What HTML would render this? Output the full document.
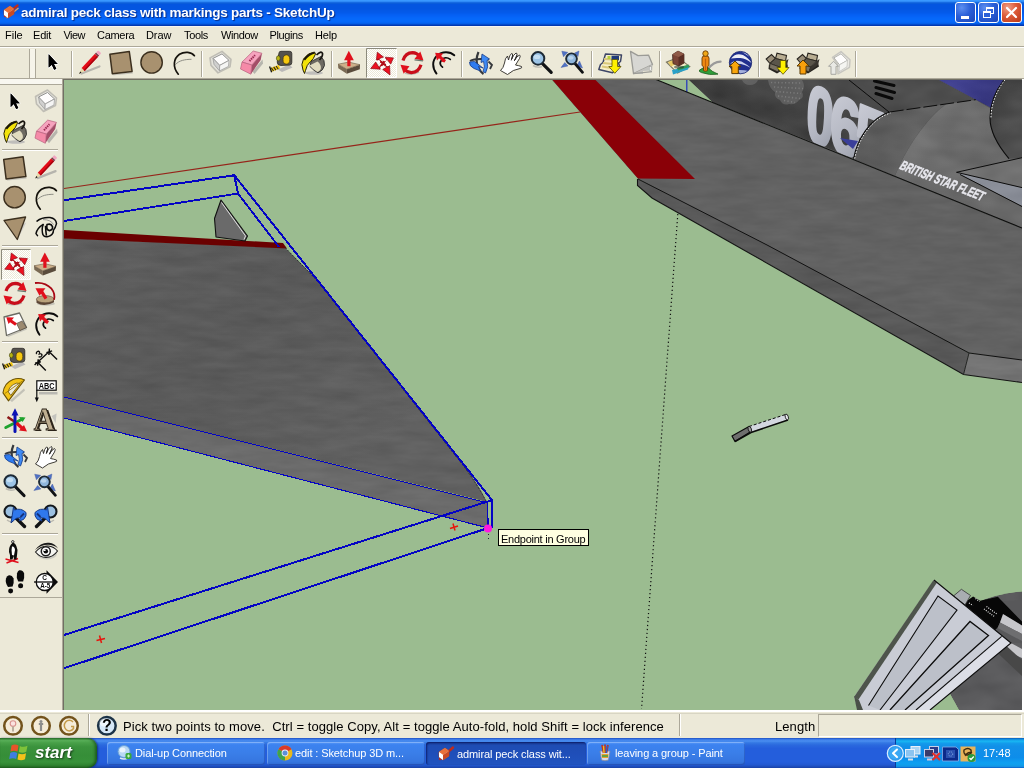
<!DOCTYPE html>
<html><head><meta charset="utf-8"><title>admiral peck class with markings parts - SketchUp</title>
<style>
html,body{margin:0;padding:0;}
body{width:1024px;height:768px;overflow:hidden;background:#ece9d8;position:relative;font-family:"Liberation Sans","DejaVu Sans",sans-serif;font-size:11px;color:#000;}
#root{position:absolute;left:0;top:0;width:1024px;height:768px;overflow:hidden;will-change:transform;transform:translateZ(0);}
.abs,.abs-all *{position:absolute;}
div,span{box-sizing:border-box;}
#title{left:0;top:0;width:1024px;height:26px;background:linear-gradient(to bottom,#3a98ff 1.92%,#2f8af6 5.77%,#166ae2 9.62%,#0a5cda 13.46%,#0455e0 17.31%,#0455e0 21.15%,#0455e0 25.00%,#0455e0 28.85%,#0455e0 32.69%,#0456e2 36.54%,#0458e6 40.38%,#0459e8 44.23%,#045aea 48.08%,#045cee 51.92%,#055ff2 55.77%,#0561f5 59.62%,#0663f7 63.46%,#0666f9 67.31%,#0668fa 71.15%,#0669fb 75.00%,#0569fb 78.85%,#0568fa 82.69%,#0565f4 86.54%,#045ee8 90.38%,#034acc 94.23%,#0238b0 98.08%);}
#title .t{left:21px;top:5px;color:#fff;font-weight:bold;font-size:13.5px;letter-spacing:-0.25px;white-space:nowrap;text-shadow:1px 1px 1px #0a2a80;}
.cap{top:2px;width:21px;height:21px;border:1px solid #fff;border-radius:3px;background:radial-gradient(circle at 30% 25%,#5d8ff0 0%,#2a5fd8 45%,#1c46b8 100%);}
.cap.x{background:radial-gradient(circle at 30% 25%,#f0a088 0%,#dc5a38 45%,#b83818 100%);}
#menu{left:0;top:26px;width:1024px;height:20px;background:#ece9d8;border-top:1px solid #f6f5f0;}
#menu span{position:absolute;top:2px;white-space:nowrap;font-size:11px;}
#tb{left:0;top:46px;width:1024px;height:33px;background:#ece9d8;border-top:1px solid #aca899;}
.vsep{width:2px;border-left:1px solid #aca899;border-right:1px solid #fff;}
#ltb{left:0;top:79px;width:63px;height:631px;background:#ece9d8;border-right:1px solid #aca899;}
.hsep{height:2px;border-top:1px solid #aca899;border-bottom:1px solid #fff;left:2px;width:56px;}
#status{left:0;top:710px;width:1024px;height:28px;background:#ece9d8;border-top:2px solid #fff;}
#status .st{left:123px;top:7px;font-size:13px;letter-spacing:0.07px;white-space:pre;}
#taskbar{left:0;top:738px;width:1024px;height:30px;background:linear-gradient(to bottom,#1f4fc0 0%,#3a7ae8 5%,#4a8ef0 10%,#3478e4 16%,#2a68de 24%,#245edc 35%,#245edc 80%,#2258d0 90%,#1d4bb8 96%,#1941a5 100%);}
#start{left:0;top:0;width:97px;height:30px;border-radius:0 9px 9px 0;background:linear-gradient(to bottom,#2f7a32 0%,#58b058 8%,#48a048 16%,#3a923c 30%,#368e38 60%,#38923a 80%,#2e822f 92%,#236a24 100%);box-shadow:inset -2px 0 3px rgba(0,40,0,.5), 1px 0 2px rgba(0,0,60,.5);}
#start .s{left:35px;top:5px;color:#fff;font-weight:bold;font-style:italic;font-size:17px;text-shadow:1px 1px 2px rgba(0,0,0,.6);letter-spacing:0px;}
.tbtn{top:4px;height:23px;width:158px;border-radius:3px;background:linear-gradient(to bottom,#5a9af8 0%,#3c82f0 12%,#3a7ee8 50%,#3676e0 85%,#2e68d0 100%);color:#fff;font-size:11px;box-shadow:inset 1px 1px 0 rgba(255,255,255,.25), inset -1px -1px 0 rgba(0,0,80,.2);}
.tbtn.on{background:linear-gradient(to bottom,#1a3f9c 0%,#1e4cb4 15%,#1f4fba 60%,#2054c0 100%);box-shadow:inset 1px 1px 2px rgba(0,0,60,.6);}
.tbtn span{left:28px;top:5px;white-space:nowrap;letter-spacing:-0.1px;}
#tray{left:895px;top:0;width:129px;height:30px;background:linear-gradient(to bottom,#0c59b9 0%,#139ee9 6%,#18b5f2 11%,#139beb 18%,#1290e8 28%,#0d8dea 65%,#0d9ff1 82%,#0f9eed 90%,#1392e2 95%,#095bc9 100%);border-left:1px solid #0a3c9a;}
#tray .tm{left:87px;top:9px;color:#fff;font-size:11px;}
</style></head><body><div id="root">
<div id="title" class="abs abs-all"><span class="t">admiral peck class with markings parts - SketchUp</span>
<div class="cap" style="left:955px"><div style="left:5px;top:13px;width:8px;height:3px;background:#fff"></div></div><div class="cap" style="left:978px"><div style="left:7px;top:4px;width:8px;height:7px;border:1px solid #fff;border-top-width:2px"></div><div style="left:4px;top:8px;width:8px;height:7px;border:1px solid #fff;border-top-width:2px;background:#2a5fd8"></div></div><div class="cap x" style="left:1001px"><svg width="19" height="19" viewBox="0 0 19 19" style="left:0;top:0"><path d="M5,5 L14,14 M14,5 L5,14" stroke="#fff" stroke-width="2.200" stroke-linecap="round"/></svg></div>
<svg width="18" height="18" viewBox="0 0 18 18" style="left:2px;top:3px"><path d="M3,13 L15.500,2.500" stroke="#c02a1a" stroke-width="2.400" stroke-linecap="round"/><path d="M4.500,15 L16.500,5" stroke="#e8a060" stroke-width="1.300"/><polygon points="2,7 8,3 12,6 12,11 6,15 2,12" fill="#f4e8d8" stroke="#a04028" stroke-width=".8"/><polygon points="2,7 8,3 12,6 6,10" fill="#e8703a"/><polygon points="6,10 12,6 12,11 6,15" fill="#c84a24"/><polygon points="2,7 6,10 6,15 2,12" fill="#fff"/></svg></div>
<div id="menu" class="abs"><span style="left:5px;letter-spacing:0px">File</span><span style="left:33px;letter-spacing:-0.2px">Edit</span><span style="left:63.5px;letter-spacing:-0.6px">View</span><span style="left:97px;letter-spacing:-0.3px">Camera</span><span style="left:146px;letter-spacing:-0.1px">Draw</span><span style="left:184px;letter-spacing:-0.35px">Tools</span><span style="left:221px;letter-spacing:-0.4px">Window</span><span style="left:269.5px;letter-spacing:-0.4px">Plugins</span><span style="left:315px;letter-spacing:-0.2px">Help</span></div>
<div id="tb" class="abs abs-all">
<div style="left:0;top:0;width:1024px;height:1px;background:#fff"></div>
<div style="left:29px;top:2px;width:7px;height:30px;border-left:1px solid #aca899;border-right:1px solid #aca899;background:#f6f4ea"></div>
<div class="vsep" style="left:71px;top:4px;height:26px"></div>
<div class="vsep" style="left:201px;top:4px;height:26px"></div>
<div class="vsep" style="left:331px;top:4px;height:26px"></div>
<div class="vsep" style="left:461px;top:4px;height:26px"></div>
<div class="vsep" style="left:591px;top:4px;height:26px"></div>
<div class="vsep" style="left:659px;top:4px;height:26px"></div>
<div class="vsep" style="left:758px;top:4px;height:26px"></div>
<div class="vsep" style="left:855px;top:4px;height:26px"></div>
<div style="left:0;top:31px;width:1024px;height:1px;background:#aca899"></div>
</div>
<div id="ltb" class="abs abs-all">
<div style="left:0;top:0;width:62px;height:6px;background:#f8f7f0;border-bottom:1px solid #aca899"></div>
<div class="hsep" style="top:70px"></div>
<div class="hsep" style="top:166px"></div>
<div class="hsep" style="top:262px"></div>
<div class="hsep" style="top:358px"></div>
<div class="hsep" style="top:454px"></div>
<div style="left:0;top:518px;width:62px;height:1px;background:#aca899"></div>
</div>
<svg id="vp" width="1024" height="768" viewBox="0 0 1024 768" style="position:absolute;left:0;top:0">
<defs>
<clipPath id="vclip"><rect x="64" y="80" width="958" height="630"/></clipPath>
<filter id="tex" x="0" y="0" width="100%" height="100%" color-interpolation-filters="sRGB">
  <feTurbulence type="fractalNoise" baseFrequency="0.025 0.11" numOctaves="3" seed="7" result="n"/>
  <feColorMatrix in="n" type="matrix" values="1 0 0 0 0  1 0 0 0 0  1 0 0 0 0  0 0 0 0 1" result="g"/>
  <feComposite in="SourceGraphic" in2="g" operator="arithmetic" k1="0" k2="1" k3="0.07" k4="-0.04" result="m"/>
  <feComposite in="m" in2="SourceGraphic" operator="in"/>
</filter>
<linearGradient id="lwing" gradientUnits="userSpaceOnUse" x1="64" y1="240" x2="300" y2="520">
  <stop offset="0" stop-color="#5f5f5f"/><stop offset="0.5" stop-color="#5b5b5b"/><stop offset="1" stop-color="#626262"/>
</linearGradient>
<linearGradient id="fus" gradientUnits="userSpaceOnUse" x1="800" y1="80" x2="770" y2="150">
  <stop offset="0" stop-color="#4a4a4a"/><stop offset="0.6" stop-color="#3e3e3e"/><stop offset="1" stop-color="#565656"/>
</linearGradient>
<filter id="tex2" x="0" y="0" width="100%" height="100%" color-interpolation-filters="sRGB">
  <feTurbulence type="fractalNoise" baseFrequency="0.03 0.06" numOctaves="2" seed="3" result="n"/>
  <feColorMatrix in="n" type="matrix" values="1 0 0 0 0  1 0 0 0 0  1 0 0 0 0  0 0 0 0 1" result="g"/>
  <feComposite in="SourceGraphic" in2="g" operator="arithmetic" k1="0" k2="1" k3="0.10" k4="-0.05" result="m"/>
  <feComposite in="m" in2="SourceGraphic" operator="in"/>
</filter>
<linearGradient id="nacd" gradientUnits="userSpaceOnUse" x1="860" y1="120" x2="920" y2="170"><stop offset="0" stop-color="#5a5a5a"/><stop offset="1" stop-color="#646464"/></linearGradient>
<linearGradient id="nacl" gradientUnits="userSpaceOnUse" x1="930" y1="110" x2="1000" y2="200"><stop offset="0" stop-color="#707070"/><stop offset="1" stop-color="#666"/></linearGradient>
<linearGradient id="nacr" gradientUnits="userSpaceOnUse" x1="990" y1="100" x2="1022" y2="120"><stop offset="0" stop-color="#3e3e3e"/><stop offset="1" stop-color="#505050"/></linearGradient>
<linearGradient id="blu" gradientUnits="userSpaceOnUse" x1="940" y1="80" x2="995" y2="105"><stop offset="0" stop-color="#444496"/><stop offset="1" stop-color="#38387e"/></linearGradient>
<clipPath id="numclip"><path d="M689,80 L849,80 L889.7,112 C870,118 857,140 853.7,158.6 L713,102.5 Z"/></clipPath>
<linearGradient id="numg" x1="0.2" y1="0.15" x2="0.6" y2="1"><stop offset="0" stop-color="#c8cad4"/><stop offset="0.6" stop-color="#b4b7c2"/><stop offset="1" stop-color="#9a9eaa"/></linearGradient>
</defs>
<rect x="63" y="79" width="961" height="633" fill="#fff"/><rect x="63" y="79" width="959" height="631" fill="#716f64"/>
<g clip-path="url(#vclip)">
<rect x="64" y="80" width="958" height="630" fill="#9bbc90"/>

<!-- left wing -->
<g filter="url(#tex)">
<path d="M64,238 L285,247.5 L318,280.5 L465,466 Q480,487 487,502 L64,397 Z" fill="url(#lwing)"/>
<polygon points="64,397 487,502.5 488,528 64,418" fill="#6c6c6c"/>
</g>
<polygon points="64,230 283,243 287,248.5 64,238.5" fill="#6a0000"/>
<!-- small fin -->
<polygon points="221,200 247.5,236 245,241 216,237 214.5,218.5" fill="#6a6a6a" stroke="#111" stroke-width="1.100" stroke-linejoin="round"/>
<polyline points="221.500,202.500 245.500,236 244,239.500" fill="none" stroke="#e0e0e0" stroke-width="1"/>

<!-- red axis -->
<line x1="64" y1="188.5" x2="580" y2="112" stroke="#96241a" stroke-width="1.200"/>

<!-- right wing -->
<g filter="url(#tex)">
<polygon points="552,80 657,80 1022,228 1022,361 969,353 638,179" fill="#636363"/>
<polygon points="638,179 637.5,185.5 652,198 963.5,374.5 969,353 768,245.5" fill="#5a5a5a"/>
<polygon points="969,353 1022,360 1022,382.5 963.5,374.5" fill="#757575"/>
</g>
<polygon points="552.5,80 595.5,80 695,179 638,178.5" fill="#8a0007"/>
<polyline points="638,179 768,245.5 969,353 1022,360" fill="none" stroke="#111" stroke-width="1"/>
<polyline points="637.5,179 637.5,185.5 652,198 963.5,374.5 1022,382.5" fill="none" stroke="#141414" stroke-width="1.1"/>
<line x1="969" y1="353" x2="963.5" y2="374.5" stroke="#222" stroke-width="1"/>

<!-- fuselage -->
<polygon points="689,80 1022,80 1022,228 713,102.5" fill="#5a5a5a"/>
<g filter="url(#tex2)">
<polygon points="689,80 849,80 889.7,112 870,124 858,144 853.7,158.6 713,102.5" fill="url(#fus)"/>
<polygon points="849,80 939,80 975.8,99.7 889.7,112" fill="#4c4c4c"/>
<path d="M853.7,158.6 C857,140 870,118 889.7,112 L946,104 C925,120 905,150 895,176 Z" fill="url(#nacd)"/>
<path d="M946,104 L975.8,99.7 L990,108 L990,120 L993.4,135.8 L1009,158.6 L1022,158 L1022,228 L895,176 C905,150 925,120 946,104 Z" fill="url(#nacl)"/>
<path d="M1004,80 L1022,80 L1022,157.7 L1009,158.6 C1000,148 990,134 990,118 C990,104 996,90 1004,80 Z" fill="url(#nacr)"/>
<polygon points="939,80 1004,80 996,92 991,108 975.8,99.7" fill="url(#blu)"/>
<polygon points="956.5,172.3 1022,157.7 1022,187.6" fill="#707070"/>
<polygon points="956.5,172.3 1022,187.6 1022,206" fill="#8b8f99"/>
</g>
<g fill="#8a8a8a" opacity=".38"><path d="M742,80 L758,80 Q756,85 750,85 Q744,85 742,80 Z"/><path d="M768,80 L802,80 Q806,86 802,92 Q805,97 799,100 Q796,105 789,104 Q783,106 780,100 Q774,98 775,92 Q769,88 768,80 Z"/></g>
<g fill="none" stroke="#a4a4a4" opacity=".4" stroke-width="1.600" stroke-dasharray="1.200 2.300"><path d="M771,82.500 L801,83 M774,87 L803,88.500 M776,91.500 L801,93.500 M778,96 L800,98.500 M784,100.500 L795,102.500"/></g>
<g clip-path="url(#numclip)"><text transform="matrix(0.600,0.240,-0.05,1,805.5,138.8)" font-family="Liberation Sans,sans-serif" font-weight="bold" font-size="80" fill="url(#numg)" stroke="url(#numg)" stroke-width="3.500" stroke-linejoin="round">0</text>
<text transform="matrix(0.680,0.272,-0.05,1,829.0,148.4)" font-family="Liberation Sans,sans-serif" font-weight="bold" font-size="80" fill="url(#numg)" stroke="url(#numg)" stroke-width="3.500" stroke-linejoin="round">6</text>
<text transform="matrix(0.680,0.272,-0.05,1,854.0,158.6)" font-family="Liberation Sans,sans-serif" font-weight="bold" font-size="80" fill="url(#numg)" stroke="url(#numg)" stroke-width="3.500" stroke-linejoin="round">5</text>
<polygon points="840,138 858,141 853,149" fill="#3a3f9a"/></g>
<g stroke="#0a0a0a" stroke-width="3" stroke-linecap="round"><path d="M874.500,81 L894,85.500 M876,87.500 L894.500,92.500 M876,93.500 L892,98.500"/></g>
<g fill="none" stroke="#0c0c0c" stroke-width="1">
<line x1="849" y1="80" x2="889" y2="112"/>
<path d="M889.7,112 L975.8,99.7" stroke-dasharray="14 3"/>
<path d="M956.5,172.3 L1022,157.7 M956.5,172.3 L1022,187.6 M960,174.5 L1022,206.5"/>
</g>
<path d="M853.7,158.6 C857,140 870,118 889.7,112" fill="none" stroke="#0c0c0c" stroke-width="1.200"/>
<path d="M854.700,158.6 C858,140 871,119 890.500,113" fill="none" stroke="#f4f4f4" stroke-width="1" stroke-dasharray="1.500 1.500"/>
<path d="M1004,80 C996,90 990,104 990,118 C990,134 1000,148 1009,158.6" fill="none" stroke="#0c0c0c" stroke-width="1.100"/>
<path d="M1004.800,80 C997,90 991,104 991,118" fill="none" stroke="#f4f4f4" stroke-width="1" stroke-dasharray="1.500 1.500"/>
<text transform="translate(898.5,168.6) rotate(21.2) skewX(-12)" font-family="Liberation Sans,sans-serif" font-weight="bold" font-size="13.500" fill="#e8e8ee" stroke="#e8e8ee" stroke-width=".500" textLength="89" lengthAdjust="spacingAndGlyphs">BRITISH STAR FLEET</text>
<line x1="686.8" y1="80" x2="686.8" y2="92" stroke="#2030c0" stroke-width="1.200"/>
<line x1="656" y1="79.5" x2="1022" y2="228" stroke="#0e0e0e" stroke-width="1.100"/>

<!-- small rod -->
<polygon points="732,436 749,426.500 751,431.500 735,441.500" fill="#6e6e6e" stroke="#0a0a0a" stroke-width="1.200" stroke-linejoin="round"/>
<polygon points="749,426.500 785.500,414.500 788,419.500 751,432" fill="#d3d7df"/>
<path d="M735,441.500 L751,432.500 L788,420" fill="none" stroke="#0a0a0a" stroke-width="1.500"/>
<path d="M749,426.500 L785.500,414.500" fill="none" stroke="#0a0a0a" stroke-width="1" stroke-dasharray="3 2"/>
<ellipse cx="786.800" cy="417" rx="1.500" ry="3" fill="#e6e8ee" stroke="#0a0a0a" stroke-width=".8" transform="rotate(-18 786.8 417)"/>
<ellipse cx="749.800" cy="429.300" rx="1.600" ry="3" fill="#9a9a9a" stroke="#0a0a0a" stroke-width=".8" transform="rotate(-18 749.8 429.3)"/>

<!-- bottom-right object -->
<path d="M975,603 Q1000,593 1022,591.500 L1022,710 L959,710 L949,692 Z" fill="#5a5a5c" filter="url(#tex2)"/>
<polygon points="962,602 1011,643 1022,643 1022,600 975,603" fill="#58585a"/>
<polygon points="963,603.500 973.100,596.400 980.200,600.700 997.800,596.700 1022,621.600 1022,626 1003.600,614.500 997.800,627.400 995,630" fill="#070707"/>
<path d="M1003,614 L1022,625.500 L1022,634 L1000,622.500 Z" fill="#c6c6ca"/>
<path d="M1000,622.500 L1022,634 L1022,641 L997.500,628 Z" fill="#6e6e70"/>
<path d="M1007,641 L1022,649 L1022,658 L1003,650 Z" fill="#c6c6ca"/>
<path d="M990,631 L1022,660 L1022,676 L986,642 Z" fill="#484848"/>
<path d="M969,603 L973,605.500 M975.500,598.500 L979.500,601.500 M984,609 L995,617 M986.500,606.500 L997.500,614.500" stroke="#e8e8e8" stroke-width="1.200" stroke-dasharray="1 1.300"/>
<polygon points="953.500,596 961.400,589.300 970.500,595.500 965,605" fill="#a9adb1" stroke="#333" stroke-width=".8"/>
<polygon points="934,580 1011,643 930,710 858,710 854,697" fill="#c9ccd5"/>
<polygon points="938,596 957,610 880,710 868.500,705.500" fill="#bcc0c9"/>
<polygon points="970,621.500 988.500,635.500 905,710 890,710" fill="#bcc0c9"/>
<polygon points="1001.700,636.400 1011,643 930,710 916,710" fill="#dcdee6"/>
<polygon points="933.300,580.300 937,582.500 858.500,699.500 854,697" fill="#4e544c"/>
<polygon points="854,696 859,700 863,710 857,710" fill="#4a5048"/>
<g fill="none" stroke="#0c0c0c" stroke-width="1.100">
<path d="M934,580 L1011,643 L930,710"/>
<path d="M868.500,705.500 L938,596 L957,610 L880,710"/>
<path d="M890,710 L970,621.500 L988.500,635.500 L905,710" stroke-width="1.300"/>
<path d="M1001.700,636.400 L916,710"/>
</g>
<!-- dotted guide -->
<line x1="677.8" y1="214" x2="641.5" y2="709" stroke="#101010" stroke-width="1.200" stroke-dasharray="1.200 2.800"/>

<!-- selection bounding box -->
<path d="M285,247.5 L318,281.5 L464,466.5 Q479,487 486.500,502" fill="none" stroke="#2a2a30" stroke-width="1" stroke-dasharray="2 1.500"/>
<g stroke="#0404c4" fill="none" shape-rendering="crispEdges">
<polyline points="64,200.25 234.25,175.25 492.25,500.5 492.5,528.5" stroke-width="2"/>
<polyline points="64,221 238,193.5 279,247" stroke-width="1.900"/>
<line x1="487.5" y1="502" x2="488" y2="528" stroke-width="1.400"/>
<line x1="234.25" y1="175.25" x2="238" y2="193.5" stroke-width="2"/>
<line x1="64" y1="397" x2="486" y2="502.5" stroke-width="1.100"/>
<line x1="64" y1="418" x2="488" y2="528" stroke-width="1.100"/>
<polyline points="64,635 488.5,501.25 492.25,500.5" stroke-width="2"/>
<line x1="64" y1="668.25" x2="488" y2="528" stroke-width="2"/>
</g>
<circle cx="488" cy="528.5" r="4" fill="#ff19e0"/>
<g stroke="#e8140c" stroke-width="1.500">
<path d="M450,528.5 L458,526 M453,523.5 L455,530.5"/>
<path d="M96.500,640.5 L105,638.500 M99.500,635.500 L101.500,643"/>
</g>
</g>
<line x1="488.500" y1="534" x2="488.500" y2="541" stroke="#223" stroke-width="1" stroke-dasharray="1 3"/>
</svg>
<div class="abs" style="left:498px;top:529px;width:91px;height:17px;background:#ffffe1;border:1px solid #000;font-size:11px;line-height:15px;padding:2px 0 0 2px;white-space:nowrap;letter-spacing:-0.25px;overflow:hidden">Endpoint in Group</div>
<svg id="icons" width="1024" height="768" viewBox="0 0 1024 768" style="position:absolute;left:0;top:0;pointer-events:none">
<defs>
<pattern id="chk" width="2" height="2" patternUnits="userSpaceOnUse"><rect width="2" height="2" fill="#fff"/><rect width="1" height="1" fill="#ece9d8"/><rect x="1" y="1" width="1" height="1" fill="#ece9d8"/></pattern>
<g id="i-select"><path d="M8.2,4.3 L8.2,17.6 L11.3,14.7 L13.7,19.8 L15.8,18.8 L13.4,13.9 L17.2,13.9 Z" fill="#000" stroke="#fff" stroke-width="1.6" stroke-linejoin="round" paint-order="stroke"/><path d="M8.2,4.3 L8.2,17.6 L11.3,14.7 L13.7,19.8 L15.8,18.8 L13.4,13.9 L17.2,13.9 Z" fill="#000"/></g>
<g id="i-pencil"><path d="M4,22.5 L22,15.5" stroke="#8a8a8a" stroke-width="2.2" stroke-linecap="round" opacity=".55"/><g transform="translate(1.6,22.9) rotate(-47)"><polygon points="0,0 6,-2.1 6,2.1" fill="#e8d9a8"/><polygon points="0,0 2.6,-0.9 2.6,0.9" fill="#111"/><rect x="6" y="-2.1" width="19.5" height="4.2" fill="#e30b17"/><rect x="6" y="0.6" width="19.5" height="1.5" fill="#a80510"/><rect x="25.5" y="-2.1" width="1.7" height="4.2" fill="#7a3a48"/><rect x="27.2" y="-2.1" width="3" height="4.2" rx="1" fill="#f2a4c0"/></g></g>
<g id="i-rect"><polygon points="3.8,24 23.6,21.4 23.8,22.8 4.5,24.6" fill="#999" opacity=".5"/><polygon points="0.9,3.7 20.3,0.9 23.1,20.8 3.3,23.1" fill="#a8916f" stroke="#3b2f1e" stroke-width="1.5" stroke-linejoin="round"/></g>
<g id="i-circle"><circle cx="12" cy="12" r="10.7" fill="#a8916f" stroke="#3b2f1e" stroke-width="1.4"/></g>
<g id="i-arc"><path d="M3.5,13.5 C7,9.5 13,8.3 19.5,8.3" fill="none" stroke="#8d8d85" stroke-width="1"/><path d="M22.4,4.7 C19.5,0.8 12.5,0.2 7.5,3.3 C1.5,7.5 0.3,16 6.3,23.2" fill="none" stroke="#15120c" stroke-width="1.7" stroke-linecap="round"/></g>
<g id="i-component"><g opacity=".95"><polygon points="1.5,7.5 13.5,1 22.5,9 21.5,16.5 9.5,22.5 2.5,15" fill="#e4e3dc" stroke="#bdbbb3" stroke-width="1.6" stroke-linejoin="round"/><polygon points="4.5,8 13.5,3.5 20.5,10 11.2,15" fill="#fff" stroke="#8f8f8f" stroke-width="1"/><polygon points="4.5,8 11.2,15 11,20.5 5.5,14" fill="#cfcfcf" stroke="#9a9a9a" stroke-width=".8"/><polygon points="11.2,15 20.5,10 20,16 11,20.5" fill="#f6f6f6" stroke="#9a9a9a" stroke-width=".8"/></g></g>
<g id="i-eraser"><polygon points="13,21 23,9 23.5,13 15,23.5" fill="#8a8a8a" opacity=".55"/><polygon points="12.3,14.4 22.5,2.7 21.2,9.3 11.3,23.6" fill="#a34d68"/><polygon points="13.7,0.4 22.5,2.7 12.3,14.4 2.5,11.5" fill="#f6a3be" stroke="#b8627e" stroke-width=".7"/><polygon points="2.5,11.5 12.3,14.4 11.3,23.6 1,18.4" fill="#f58aa8" stroke="#b8627e" stroke-width=".7"/><path d="M10,10.5 L15.5,4.5" stroke="#9c2c52" stroke-width="2" stroke-dasharray="1.5 .8"/></g>
<g id="i-tape"><polygon points="9,19 20,14 23.5,17 13,21.5" fill="#8a8a9a" opacity=".5"/><path d="M10,2.5 Q10,0.8 12,0.8 L20.5,0.8 Q22.8,0.8 22.8,3 L22.8,12 Q22.8,14.5 20.5,14.6 L12,15 Q8.2,15 8.2,11.5 Z" fill="#55524e" stroke="#2a2825" stroke-width=".8"/><ellipse cx="17.4" cy="9" rx="3.4" ry="4.6" fill="#f6c810" stroke="#4a3a08" stroke-width=".7"/><ellipse cx="9.3" cy="7.8" rx="1.9" ry="2.6" fill="#b8b414" stroke="#3a3a08" stroke-width=".6"/><g transform="translate(10.5,16.3) rotate(160)"><rect x="0" y="-1.9" width="9" height="3.8" fill="#f1c40f"/><path d="M2,-1.9 L3,1.9 M4.5,-1.9 L5.5,1.9 M7,-1.9 L8,1.9" stroke="#222" stroke-width="1"/><rect x="8.6" y="-2.4" width="1.3" height="6" fill="#111"/></g></g>
<g id="i-paint"><ellipse cx="13" cy="22" rx="9" ry="1.8" fill="#8a8a9a" opacity=".45"/><path d="M10,10.5 L20,5.5 Q24,9 23.5,14.5 Q22,20 17,21.8 Q13,20 9,15.5 Z" fill="#6d6a62" stroke="#222" stroke-width=".8"/><path d="M8.5,14.5 L16.5,10.5 Q20.5,13.5 19.8,18 Q18.5,20.5 16.5,21 Q12.5,19 8.5,14.5 Z" fill="#e1dcc0"/><path d="M15.5,4 Q20,-0.5 21.5,2.3 Q22,5 18.5,9" fill="none" stroke="#15120c" stroke-width="1.7"/><path d="M13.5,1 Q7,1.5 2.5,8 Q-0.5,13.5 2,19 L3.5,22.5 L4.5,19.5 Q5.5,14 9.5,10.5 Q12.5,8.5 14.5,3 Z" fill="#f3e30a" stroke="#2a2408" stroke-width="1"/><path d="M13.5,1 Q7,1.5 2.5,8 L4,9.5 Q8,4 14,2.5 Z" fill="#1a1608"/></g>
<g id="i-pushpull"><polygon points="1,13.8 9.8,18.8 9.8,23.4 1.3,17.8" fill="#7a6a54"/><polygon points="9.8,18.8 23,14.3 22.8,18.8 9.8,23.4" fill="#5a4c3c"/><polygon points="1,13.8 11.7,11.7 23,14.3 9.8,18.8" fill="#cdb08a" stroke="#6b5a45" stroke-width=".6"/><rect x="10.3" y="9" width="3.2" height="6.8" fill="#e0101c"/><polygon points="11.8,0.4 16.8,9.8 7.1,9.8" fill="#e0101c"/></g>
<g id="i-move"><path d="M7,7 L18.5,15.5 M16.5,6.5 L9,17" stroke="#b00c18" stroke-width="2.2"/><g fill="#ee1020" stroke="#8c0a14" stroke-width=".7" stroke-linejoin="round"><polygon points="7.3,0.5 13.5,5.2 6.4,7.9"/><polygon points="23.4,6.1 15.3,5.4 20.7,12.3"/><polygon points="20,23.1 12.7,17.6 19.6,13.9"/><polygon points="0.7,16.7 5.7,10.3 10.2,17.4"/></g><g fill="#fff"><circle cx="8.6" cy="9.7" r="1.5"/><circle cx="14.7" cy="7.9" r="1.5"/><circle cx="17.5" cy="12.9" r="1.5"/><circle cx="11.8" cy="15.7" r="1.5"/></g></g>
<g id="i-rotate"><path d="M5,22.5 Q12,25 19,21.5" fill="none" stroke="#8a8a8a" stroke-width="1.5" opacity=".5"/><path d="M3,9.8 Q5.5,2 12.5,2 Q17,2.2 19.5,5.5" fill="none" stroke="#c80d1a" stroke-width="3.2"/><polygon points="20.3,0.8 23.5,9.8 14.5,8.3" fill="#e0101c"/><path d="M21,14.2 Q18.5,22 11.5,22 Q7,21.8 4.5,18.5" fill="none" stroke="#c80d1a" stroke-width="3.2"/><polygon points="3.7,23.2 0.5,14.2 9.5,15.7" fill="#e0101c"/><path d="M14.5,9.3 L23,10.3" stroke="#6a7a70" stroke-width="1.1"/></g>
<g id="i-offset"><path d="M23.3,4.7 C19,0.5 11,0.5 6,5 C1,10 1,17 5.5,23" fill="none" stroke="#0c0c0c" stroke-width="1.9" stroke-linecap="round"/><path d="M19.3,8.8 C16,6.5 12.5,7 10.5,9.5 C8.5,12 9,14.5 11.5,16.5" fill="none" stroke="#0c0c0c" stroke-width="1.7" stroke-linecap="round"/><path d="M8,5.5 L13.5,10.5" stroke="#e0101c" stroke-width="3.2"/><polygon points="4.2,2.2 12.2,2.8 6,9.8" fill="#e0101c"/><polygon points="11,8.5 15,9.5 13.5,12 10.5,11" fill="#e0101c"/></g>
<g id="i-orbit"><path d="M2,10 Q7,7 21,8.5" fill="none" stroke="#35383c" stroke-width="2"/><path d="M10.5,1 Q7,9 10,16 Q12.5,21 15.5,23" fill="none" stroke="#35383c" stroke-width="2.2"/><path d="M1.5,11 Q1,15 6,17.5 L12.5,20 L10.5,15.5 L15,17 L6.5,10.5 Z" fill="#2f7cf0" stroke="#1b3e86" stroke-width=".8"/><path d="M14,3 L21.5,8 L19,9.5 Q21,16 17.5,22 L15,20.5 Q17.5,15 15.5,10.5 L13,11.5 Z" fill="#3e8af4" stroke="#1b3e86" stroke-width=".8"/><path d="M20.5,10.5 L24,14 L22,18" fill="none" stroke="#35383c" stroke-width="1.8"/></g>
<g id="i-pan"><path d="M1.5,19.5 Q4.5,17 5.5,12 Q6,7 8.5,5 L9.5,9 Q10.5,4 12.5,2.5 Q14,2 13.5,5 L12.5,8.5 Q14.5,3.5 17,2 Q18.5,2 18,4.5 L15.5,9.5 Q18,5 20.5,4 Q22,4.5 20.5,7.5 L16.5,14 Q19.5,14.5 22.5,15.5 Q23.5,17 21,17.5 Q14,18.5 8.5,23.5 Z" fill="#fff" stroke="#2a2824" stroke-width=".9" stroke-linejoin="round"/><path d="M12.2,9.5 L13.8,4 M15.3,10 L17.8,4 " stroke="#2a2824" stroke-width=".8"/></g>
<g id="i-zoom"><path d="M3,15 Q7,17.5 12,16" fill="none" stroke="#8a8a8a" stroke-width="1.4" opacity=".5"/><path d="M12.5,13 L21.2,21.8" stroke="#101214" stroke-width="3.2" stroke-linecap="round"/><circle cx="8" cy="7.8" r="6.3" fill="#9cc4e6" stroke="#1d2a36" stroke-width="2"/><ellipse cx="7" cy="6.3" rx="3.3" ry="2.2" fill="#cfe6f6" opacity=".8"/></g>
<g id="i-zoomext"><g fill="#4f72c4" stroke="#3a52a0" stroke-width=".4"><polygon points="1.3,1.2 7.3,2.3 3,6.8"/><polygon points="18.5,1 14,3 17.5,6.5"/><polygon points="0.5,17.5 4.3,12.5 7.5,16"/><polygon points="19,11 22,18 16,16"/></g><path d="M14.5,13.5 L22,22.3" stroke="#101214" stroke-width="2.8" stroke-linecap="round"/><circle cx="11" cy="8.8" r="5.4" fill="#8fb6dc" stroke="#1d2a36" stroke-width="1.9"/><ellipse cx="10.3" cy="7.8" rx="2.8" ry="1.9" fill="#c4dcf0" opacity=".8"/></g>
<g id="i-getmodels"><path d="M7.5,3 L23.5,4 L22.5,10.5 L20.5,12 L21.5,15 L14.5,21.8 L0.8,18.5 L2.5,13.5 L5,11.5 Z" fill="#f6efc8" stroke="#3c4466" stroke-width="1.5" stroke-linejoin="round"/><path d="M5,12 L15,13 M6,8 L14,8.5 M4,15.5 L13,17" stroke="#d9c87a" stroke-width="2"/><rect x="13.5" y="4.8" width="7.5" height="4.5" fill="#1f3a7a"/><rect x="9.5" y="5" width="3" height="3" fill="#b7cf3a"/><polygon points="14,8.5 19.5,8.5 19.5,15.5 23,15.5 16.8,22.3 10.8,15.5 14,15.5" fill="#fff000" stroke="#5a5000" stroke-width=".8"/></g>
<g id="i-share"><polygon points="1.5,0.8 9,5 19.5,4.5 23.5,14 4.5,23" fill="#d7d7d3" stroke="#9b9b96" stroke-width="1.3" stroke-linejoin="round"/><polygon points="4.5,23 23.5,14 23.2,20 14,20.5 14,23.5 9,23.5" fill="#c2c2be"/><path d="M4.5,23 L23,21" stroke="#9b9b96" stroke-width="1.1"/><rect x="20.3" y="16" width="1.8" height="4" fill="#fff" stroke="#9b9b96" stroke-width=".5"/></g>
<g id="i-building"><polygon points="0.5,11.5 12,7 23.7,16 11.5,22.5" fill="#f3ecc7" stroke="#7d7a62" stroke-width="1.2"/><polygon points="6,19.5 23,15.8 22,19 7,24" fill="#2aa0c8"/><polygon points="11,17.5 22.5,14 23.5,16.5 12,20" fill="#2f9a5a"/><polygon points="2,11.5 6.5,10 9,14 5,16" fill="#e8c860"/><polygon points="6.5,4 12,0.5 18,3.5 18,12.5 12.5,15.5 7,13" fill="#7a4436" stroke="#3a211a" stroke-width=".7"/><polygon points="12.5,6.5 18,3.5 18,12.5 12.5,15.5" fill="#5a2e24"/><polygon points="6.5,4 12,0.5 18,3.5 12.5,6.5" fill="#8f5a48"/><ellipse cx="13" cy="16.5" rx="5" ry="1.5" fill="#222" opacity=".5"/></g>
<g id="i-person"><path d="M10.5,18.5 Q16,11 23,11" fill="none" stroke="#9a9a9a" stroke-width="2.4" stroke-linecap="round"/><path d="M2,19.5 Q6,15.5 11,17.5 Q14,21 20.5,23.5 Q12,25 4,22 Q1,21 2,19.5 Z" fill="#2f9e3a" stroke="#1a5e20" stroke-width=".8"/><path d="M4.5,7.5 Q4.5,5 8,5 Q11.5,5 11.5,7.5 L11.5,15 L10,16 L10,20 Q8,21.5 6,20 L6,16 L4.5,15 Z" fill="#f08a12" stroke="#6a3a06" stroke-width=".9"/><path d="M8,8 L8,20" stroke="#c0600a" stroke-width="1.2"/><ellipse cx="8" cy="3" rx="2.7" ry="2.8" fill="#f0a818" stroke="#6a3a06" stroke-width=".9"/></g>
<g id="i-earth"><circle cx="12.5" cy="12" r="11.2" fill="#20308e"/><path d="M3,8 Q8,1.5 15,4.5 Q21,8 23.5,12.5 Q18,8 12.5,7.5 Q7,7 3,8 Z" fill="#fff" opacity=".92"/><path d="M2,13 Q7,8.5 13.5,11 Q19,14 23,17.5 Q18,14.5 13,13.5 Q7,12.5 2,13 Z" fill="#dfe6f6" opacity=".9"/><path d="M14,1.5 Q19,2.5 22,6.5 Q18,4 14,1.5 Z" fill="#c4cff0"/><path d="M9,19.5 Q15,19 21,20.5 Q17,23.5 12,23 Z" fill="#c8d2f0" opacity=".8"/><circle cx="12.5" cy="12" r="11.2" fill="none" stroke="#1a2670" stroke-width=".8"/><polygon points="7,10.5 13,16 10.3,16 10.3,23 3.8,23 3.8,16 1,16" fill="#f9a60c" stroke="#5a3a04" stroke-width="1" stroke-linejoin="round"/></g>
<g id="i-boxdown"><polygon points="4,13 9,17.5 22,12 23,15.5 12,22.5 3.5,18" fill="#26241f"/><polygon points="1.2,8 6.5,3.5 10.5,7.5 5,12.5" fill="#9a8f7a" stroke="#2a2620" stroke-width="1.1"/><polygon points="10.5,7.5 12,2.2 21.5,4.5 20.5,10" fill="#b8ad92" stroke="#2a2620" stroke-width="1.1"/><polygon points="5,12.5 10.5,7.5 20.5,10 14.5,16" fill="#5a554a" stroke="#2a2620" stroke-width=".8"/><polygon points="5,12.5 14.5,16 13,21 4.5,17" fill="#7a7262" stroke="#2a2620" stroke-width=".8"/><polygon points="14.5,16 20.5,10 23.5,8 22,14 13,21" fill="#3a362f"/><polygon points="15.3,9.5 20.8,9.5 20.8,16.5 24,16.5 18,23.3 12,16.5 15.3,16.5" fill="#fff000" stroke="#5a5000" stroke-width=".8" stroke-linejoin="round"/></g>
<g id="i-boxup"><polygon points="4,13 9,17.5 22,12 23,15.5 12,22.5 3.5,18" fill="#26241f"/><polygon points="1.2,8 6.5,3.5 10.5,7.5 5,12.5" fill="#9a8f7a" stroke="#2a2620" stroke-width="1.1"/><polygon points="10.5,7.5 12,2.2 21.5,4.5 20.5,10" fill="#b8ad92" stroke="#2a2620" stroke-width="1.1"/><polygon points="5,12.5 10.5,7.5 20.5,10 14.5,16" fill="#5a554a" stroke="#2a2620" stroke-width=".8"/><polygon points="5,12.5 14.5,16 13,21 4.5,17" fill="#7a7262" stroke="#2a2620" stroke-width=".8"/><polygon points="14.5,16 20.5,10 23.5,8 22,14 13,21" fill="#3a362f"/><polygon points="7,9 13,15 10,15 10,23 4,23 4,15 1,15" fill="#f9a00c" stroke="#5a3a04" stroke-width="1" stroke-linejoin="round"/></g>
<g id="i-house"><g opacity=".95"><polygon points="5,6.5 13.5,0.8 22.5,9 22,16.5 10.5,23 10,13.5" fill="#ecebe6" stroke="#c6c5bf" stroke-width="1.5" stroke-linejoin="round"/><polygon points="6.5,7 13.5,3 20,9.5 12,14" fill="#fff" stroke="#a9a9a4" stroke-width=".9"/><polygon points="12,14 20,9.5 19.5,16 11.5,21" fill="#f6f6f4" stroke="#b9b9b4" stroke-width=".7"/><polygon points="6,10.5 11,15.5 8.5,15.5 8.5,23.5 3.5,23.5 3.5,15.5 1,15.5" fill="#e9e9e5" stroke="#a5a5a0" stroke-width="1" stroke-linejoin="round"/></g></g>
<g id="i-polygon"><polygon points="20,8 23.5,6.5 16,21" fill="#aab" opacity=".45"/><polygon points="1.2,4.5 22.8,1 14.5,23.5" fill="#a8916f" stroke="#3b2f1e" stroke-width="1.3" stroke-linejoin="round"/></g>
<g id="i-freehand"><path d="M3,5.5 Q8,1.5 16,2 Q22,3 22.5,8 Q21.5,12 19.5,14.5 Q19.5,19.5 14,21 Q9,22 8.5,17.5 Q7.5,12 9.5,8.5 Q3,12.5 2,18 L3.5,20" fill="none" stroke="#0c0c0c" stroke-width="1.5" stroke-linecap="round"/><path d="M13,9 Q17,7.5 18.5,11 Q19,14.5 15.5,15 Q12,14.5 13,9 Z M11.5,10 Q12,18 12.5,20" fill="none" stroke="#0c0c0c" stroke-width="1.6"/><path d="M9,4 Q17,4 19.5,9" fill="none" stroke="#777" stroke-width=".7"/></g>
<g id="i-followme"><ellipse cx="13" cy="22" rx="9" ry="2" fill="#8a8a8a" opacity=".4"/><path d="M3.5,18 L3.5,21 Q11,26 21,20.5 L21,17.5 Z" fill="#5c4636"/><ellipse cx="12.2" cy="17.5" rx="8.8" ry="3.6" fill="#b9a27c" stroke="#5c4636" stroke-width=".6"/><path d="M2,1.3 Q12,0 18.5,7 Q22.5,12 21,18" fill="none" stroke="#a80814" stroke-width="1.8"/><path d="M8,9 L13,17" stroke="#e0101c" stroke-width="3.3"/><polygon points="2.5,6.5 12.5,6.5 6.5,14" fill="#e0101c"/></g>
<g id="i-scale"><polygon points="4,24 23.5,16 24,17.5 5,25" fill="#888" opacity=".4"/><polygon points="1,5 16.5,1 23.5,15.5 3.5,23.5" fill="#fff" stroke="#6b6b63" stroke-width="1.3" stroke-linejoin="round"/><polygon points="13.5,11.5 19,9 23.5,15.5 17,18.5" fill="#9c8a70" stroke="#4a4036" stroke-width=".6"/><path d="M6.5,8 L13,12.5" stroke="#e0101c" stroke-width="3"/><polygon points="3.3,5.2 11,5.5 5.5,12" fill="#e0101c"/></g>
<g id="i-dimension"><path d="M1,17 L16.4,2.8 M4.3,14.5 L12.2,22.4 M15.6,3.7 L23.5,11.6 M1.5,15.2 L7.2,13.7 M4.6,11.2 L4,17.8 M12.8,4.6 L18.5,2.8 M15.8,0.5 L15.3,7" stroke="#0c0c0c" stroke-width="1.4" fill="none"/><text x="2.2" y="9.5" font-family="Liberation Sans,sans-serif" font-size="10.5" font-weight="bold" fill="#0c0c0c" transform="rotate(-40 5.6 5.3)">3</text></g>
<g id="i-protractor"><polygon points="8,23 22,11 23,13 10,24.5" fill="#888" opacity=".4"/><path d="M1,15.5 Q2,5.5 11,2 Q17,0 22.5,2.5 L6.5,23.5 Z" fill="#f3c316" stroke="#6a5206" stroke-width="1.1" stroke-linejoin="round"/><path d="M6.3,14.5 Q7.3,8 14.5,5.8 L18,6 L8.8,18 Z" fill="#ece9d8" stroke="#6a5206" stroke-width=".8"/><path d="M3,16 L20.5,3.5" stroke="#a07c0a" stroke-width=".9"/></g>
<g id="i-text"><path d="M5,13 L23.5,13 L23.5,15.5 L5,15.5" fill="#999" opacity=".6"/><rect x="2.8" y="1.8" width="19.4" height="9.4" fill="#fff" stroke="#0c0c0c" stroke-width="1.2"/><text x="4.7" y="9.6" font-family="Liberation Sans,sans-serif" font-size="8.3" font-weight="bold" fill="#0c0c0c" textLength="15.8" lengthAdjust="spacingAndGlyphs">ABC</text><path d="M2.8,11 L2.8,20" stroke="#0c0c0c" stroke-width="1.2"/><polygon points="0.8,18.5 4.8,18.5 2.8,23.3" fill="#0c0c0c"/></g>
<g id="i-axes"><path d="M4.5,9 L14.5,15.5" stroke="#8c1818" stroke-width="2.6"/><path d="M2.8,19.5 L19.5,11" stroke="#1fa32e" stroke-width="3" stroke-linecap="round"/><polygon points="16,9 22.5,9.5 19.5,14" fill="#1fa32e"/><path d="M12,6 L12,23.5" stroke="#0a12b4" stroke-width="3" stroke-linecap="round"/><polygon points="12,0.3 15.5,7.5 8.5,7.5" fill="#0a12b4"/><path d="M13.5,15 L20,21" stroke="#e0101c" stroke-width="3.2"/><polygon points="24,23.5 16,22.5 21,17" fill="#e0101c"/></g>
<g id="i-text3d"><polygon points="18,8 23,5.5 22,15" fill="#b4b4b4" opacity=".7"/><text x="1.5" y="23" font-family="Liberation Serif,serif" font-size="32" font-weight="bold" fill="#2a2218" textLength="22" lengthAdjust="spacingAndGlyphs">A</text><text x="0.2" y="22.3" font-family="Liberation Serif,serif" font-size="31" font-weight="bold" fill="#bfae90" stroke="#2a2218" stroke-width=".9" textLength="21" lengthAdjust="spacingAndGlyphs">A</text></g>
<g id="i-previous"><path d="M4,16 Q8,19 11,17" fill="none" stroke="#8a8a8a" stroke-width="1.3" opacity=".5"/><path d="M13,14 L21.5,22.5" stroke="#101214" stroke-width="3.4" stroke-linecap="round"/><circle cx="7.5" cy="7.5" r="6" fill="#9cc0e0" stroke="#14181c" stroke-width="2.1"/><path d="M10.5,3 L11.5,6 Q18,3.5 23,8.5 Q24,12 20.5,15.5 L16,17 L17.5,13.5 Q13,13.5 10.5,16.5 L8,19 Z" fill="#2f78ec" stroke="#173a86" stroke-width="1"/><path d="M17.5,13 L21,9.5" stroke="#16327a" stroke-width="1.8"/></g>
<g id="i-next"><g transform="translate(24,0) scale(-1,1)"><path d="M4,16 Q8,19 11,17" fill="none" stroke="#8a8a8a" stroke-width="1.3" opacity=".5"/><path d="M13,14 L21.5,22.5" stroke="#101214" stroke-width="3.4" stroke-linecap="round"/><circle cx="7.5" cy="7.5" r="6" fill="#9cc0e0" stroke="#14181c" stroke-width="2.1"/><path d="M10.5,3 L11.5,6 Q18,3.5 23,8.5 Q24,12 20.5,15.5 L16,17 L17.5,13.5 Q13,13.5 10.5,16.5 L8,19 Z" fill="#2f78ec" stroke="#173a86" stroke-width="1"/><path d="M17.5,13 L21,9.5" stroke="#16327a" stroke-width="1.8"/></g></g>
<g id="i-poscam"><path d="M2.5,19 L15.5,22.5 M15,18.5 L3.5,23" stroke="#e0101c" stroke-width="1.4"/><path d="M9.5,2.8 Q12.5,3 13.5,6.5 Q15,9.5 14.2,13.5 L13.5,19.5 L11,19.5 L10.5,16 L9.5,19.5 L7,19.5 Q7.5,14.5 6,12 Q5.5,6.5 9.5,2.8 Z" fill="#0c0c0c"/><path d="M9,6.5 Q11.5,6 12,10 L11,15.5 L9,15 Q8,10 9,6.5 Z" fill="#fff"/><circle cx="9.8" cy="1.8" r="1.2" fill="#fff" stroke="#0c0c0c" stroke-width=".9"/></g>
<g id="i-eye"><ellipse cx="13" cy="13.5" rx="10" ry="6" fill="#b9b9b4" opacity=".6"/><path d="M1.5,12 Q7,5.5 14,6 Q20,6.5 23.5,11 Q19,17.5 12,17.5 Q6,17.5 1.5,12 Z" fill="#f4f4f0" stroke="#1a1a1a" stroke-width="1.1"/><path d="M1,10 Q7,2 15,2.8 Q21,3.5 24,8.5 Q20,4.8 14,4.8 Q7,4.8 1,10 Z" fill="#1a1a1a"/><circle cx="11.8" cy="11.3" r="4.5" fill="#fff" stroke="#1a1a1a" stroke-width="1.5"/><circle cx="11.8" cy="11.3" r="2.3" fill="#0c0c0c"/><circle cx="10.8" cy="10.2" r=".9" fill="#fff"/></g>
<g id="i-walk"><g fill="#0a0a0a"><path d="M4.5,5.5 Q8,4.5 9.8,8.5 Q10.3,12.5 8.8,16.5 L4.2,17 Q1.2,12.5 2.2,8.5 Q3,6 4.5,5.5 Z"/><ellipse cx="6.8" cy="21" rx="2.5" ry="2.4"/><path d="M15.5,0.3 Q19,-0.2 20.3,3.5 Q20.8,7.5 19.3,11.5 L14.5,11.5 Q12.2,7.5 13.2,3.5 Q14,0.8 15.5,0.3 Z"/><ellipse cx="16.8" cy="15.8" rx="2.5" ry="2.5"/></g></g>
<g id="i-section"><polygon points="12.5,0.3 24,12 12.5,23.8" fill="#0c0c0c"/><circle cx="10.7" cy="12" r="8.5" fill="#fff" stroke="#0c0c0c" stroke-width="1.3"/><path d="M0,12 L19,12" stroke="#0c0c0c" stroke-width="1.3"/><text x="10.7" y="9.9" text-anchor="middle" font-family="Liberation Sans,sans-serif" font-size="6.5" font-weight="bold" fill="#0c0c0c">C</text><text x="6.2" y="18.2" font-family="Liberation Sans,sans-serif" font-size="6.5" font-weight="bold" fill="#0c0c0c" textLength="10" lengthAdjust="spacingAndGlyphs">A-5</text></g>
</defs>
<rect x="367" y="49" width="29" height="28" fill="url(#chk)"/><path d="M366.5,77.5 L366.5,48.5 L396.5,48.5" fill="none" stroke="#8c8a7c" stroke-width="1"/><path d="M396.5,49 L396.5,77.5 L367,77.5" fill="none" stroke="#fff" stroke-width="1"/>
<rect x="2" y="250" width="28" height="29" fill="url(#chk)"/><path d="M1.5,279.5 L1.5,249.5 L30.5,249.5" fill="none" stroke="#8c8a7c" stroke-width="1"/><path d="M30.5,250 L30.5,279.5 L2,279.5" fill="none" stroke="#fff" stroke-width="1"/>
<use href="#i-select" x="40.5" y="50.0"/>
<use href="#i-pencil" x="77.5" y="51.0"/>
<use href="#i-rect" x="109.0" y="50.6"/>
<use href="#i-circle" x="139.6" y="50.4"/>
<use href="#i-arc" x="172.0" y="51.0"/>
<use href="#i-component" x="208.5" y="50.4"/>
<use href="#i-eraser" x="239.5" y="50.6"/>
<use href="#i-tape" x="269.0" y="50.5"/>
<use href="#i-paint" x="301.0" y="51.0"/>
<use href="#i-pushpull" x="337.0" y="50.4"/>
<use href="#i-move" x="370.0" y="51.8"/>
<use href="#i-rotate" x="400.0" y="50.6"/>
<use href="#i-offset" x="431.0" y="50.6"/>
<use href="#i-orbit" x="468.0" y="51.0"/>
<use href="#i-pan" x="499.0" y="51.0"/>
<use href="#i-zoom" x="530.0" y="50.6"/>
<use href="#i-zoomext" x="560.5" y="50.0"/>
<use href="#i-getmodels" x="598.0" y="51.0"/>
<use href="#i-share" x="629.0" y="50.6"/>
<use href="#i-building" x="666.0" y="50.6"/>
<use href="#i-person" x="697.5" y="50.6"/>
<use href="#i-earth" x="728.0" y="50.6"/>
<use href="#i-boxdown" x="765.0" y="51.0"/>
<use href="#i-boxup" x="796.0" y="51.0"/>
<use href="#i-house" x="827.5" y="50.8"/>
<use href="#i-select" x="2.5" y="89.3"/>
<use href="#i-component" x="34.0" y="89.0"/>
<use href="#i-paint" x="3.0" y="120.0"/>
<use href="#i-eraser" x="34.0" y="119.7"/>
<use href="#i-rect" x="2.8" y="155.8"/>
<use href="#i-pencil" x="33.6" y="155.6"/>
<use href="#i-circle" x="2.6" y="185.2"/>
<use href="#i-arc" x="34.0" y="186.0"/>
<use href="#i-polygon" x="2.8" y="216.0"/>
<use href="#i-freehand" x="34.0" y="215.6"/>
<use href="#i-move" x="4.0" y="252.5"/>
<use href="#i-pushpull" x="33.0" y="252.0"/>
<use href="#i-rotate" x="3.0" y="281.3"/>
<use href="#i-followme" x="33.0" y="281.7"/>
<use href="#i-scale" x="3.0" y="312.0"/>
<use href="#i-offset" x="34.0" y="311.7"/>
<use href="#i-tape" x="2.0" y="347.5"/>
<use href="#i-dimension" x="33.6" y="348.0"/>
<use href="#i-protractor" x="2.0" y="377.4"/>
<use href="#i-text" x="34.0" y="379.0"/>
<use href="#i-axes" x="3.0" y="408.0"/>
<use href="#i-text3d" x="33.6" y="408.0"/>
<use href="#i-orbit" x="3.0" y="444.0"/>
<use href="#i-pan" x="34.0" y="444.5"/>
<use href="#i-zoom" x="2.8" y="473.7"/>
<use href="#i-zoomext" x="33.4" y="473.0"/>
<use href="#i-previous" x="3.0" y="504.0"/>
<use href="#i-next" x="34.0" y="504.0"/>
<use href="#i-poscam" x="3.0" y="540.0"/>
<use href="#i-eye" x="34.0" y="540.0"/>
<use href="#i-walk" x="3.8" y="570.0"/>
<use href="#i-section" x="34.0" y="570.0"/>
</svg>
<div id="status" class="abs abs-all">
<div style="left:0;top:1px;width:1024px;height:1px;background:#d8d5c4"></div>
<div class="vsep" style="left:88px;top:2px;height:22px"></div>
<div class="vsep" style="left:679px;top:2px;height:22px"></div>
<span class="st">Pick two points to move.  Ctrl = toggle Copy, Alt = toggle Auto-fold, hold Shift = lock inference</span>
<span class="st" style="left:775px">Length</span>
<div style="left:818px;top:2px;width:204px;height:23px;border:1px solid #aca899;border-right-color:#fff;border-bottom-color:#fff"></div>
<svg width="120" height="28" viewBox="0 0 120 28" style="left:0;top:-2px">
<g fill="#f5ecd9" stroke="#73531c" stroke-width="2.500"><circle cx="13" cy="15.800" r="8.800"/><circle cx="41" cy="15.800" r="8.800"/><circle cx="69" cy="15.800" r="8.800"/></g>
<circle cx="13" cy="13.500" r="2.800" fill="#fbe3e0" stroke="#d9928e" stroke-width="1.100"/><path d="M13,16.500 L13,21.500" stroke="#a79a8a" stroke-width="1.500"/>
<circle cx="41" cy="11.500" r="1.500" fill="#8d8d8d"/><path d="M41,13.500 L41,21 M38.800,14 L43.200,14" stroke="#8d8d8d" stroke-width="2.200"/>
<path d="M73,12 A5,5.300 0 1 0 73.500,18.500 L73.500,16.500 L71,16.500" fill="none" stroke="#c49b4a" stroke-width="1.500"/>
<circle cx="106.900" cy="15.800" r="8.800" fill="#d6e8f8" stroke="#1d3347" stroke-width="2.500"/>
<ellipse cx="104.500" cy="12.500" rx="5" ry="4" fill="#fff" opacity=".6"/>
<text x="106.900" y="21" text-anchor="middle" font-family="Liberation Sans,sans-serif" font-weight="bold" font-size="16" fill="#000">?</text>
</svg>
</div>
<div id="taskbar" class="abs abs-all">
<div id="start"><span class="s">start</span>
<svg width="22" height="20" viewBox="0 0 22 20" style="left:9px;top:5px">
<path d="M2.500,2.500 Q5.500,0.500 9.500,2.500 L8.500,8.500 Q5,6.800 1.500,8.500 Z" fill="#e8542a"/>
<path d="M10.800,3 Q14.500,4.800 18.500,2.800 L17.300,8.800 Q13.500,10.600 9.800,9 Z" fill="#7ec23a"/>
<path d="M1.200,10 Q4.500,8.200 8.200,10 L7.200,16 Q3.800,14.300 0.200,16 Z" fill="#3f7ee0"/>
<path d="M9.500,10.500 Q13.200,12.200 17,10.300 L16,16.300 Q12.200,18.200 8.500,16.500 Z" fill="#f4c21a"/>
</svg></div>
<div class="tbtn" style="left:107px"><svg width="16" height="16" viewBox="0 0 16 16" style="left:10px;top:3px"><circle cx="7" cy="6.500" r="6" fill="#b8d8f4" stroke="#6aa0d8" stroke-width="1"/><ellipse cx="5.500" cy="5" rx="3" ry="2.500" fill="#eaf4fc"/><path d="M3,13 Q7,15 11,13" stroke="#dfe8f2" stroke-width="1.500" fill="none"/><rect x="8.500" y="8" width="6" height="6" rx="1.500" fill="#3aa83a"/><path d="M10,11 L13,11 M11.500,9.500 L11.500,12.500" stroke="#c8f0c0" stroke-width="1.200"/></svg><span>Dial-up Connection</span></div>
<div class="tbtn" style="left:267px"><svg width="16" height="16" viewBox="0 0 16 16" style="left:10px;top:3px"><circle cx="8" cy="8" r="7.500" fill="#e8b81c"/><path d="M8,8 L1.500,4.200 A7.500,7.500 0 0 1 14.500,4.200 Z" fill="#d93a2b"/><path d="M8,8 L1.500,4.200 A7.500,7.500 0 0 0 8,15.500 Z" fill="#3fa34a"/><circle cx="8" cy="8" r="3.400" fill="#e8eef8"/><circle cx="8" cy="8" r="2.500" fill="#5b8fd8"/></svg><span>edit : Sketchup 3D m...</span></div>
<div class="tbtn on" style="left:426px;width:160px"><svg width="18" height="18" viewBox="0 0 18 18" style="left:11px;top:3px"><path d="M3,14 L16,2.500" stroke="#c02a1a" stroke-width="2.400" stroke-linecap="round"/><polygon points="2,7 8,3 12,6 12,11 6,15 2,12" fill="#f4e8d8" stroke="#a04028" stroke-width=".8"/><polygon points="2,7 8,3 12,6 6,10" fill="#e8703a"/><polygon points="6,10 12,6 12,11 6,15" fill="#c84a24"/><polygon points="2,7 6,10 6,15 2,12" fill="#fff"/></svg><span style="left:31px;top:6px">admiral peck class wit...</span></div>
<div class="tbtn" style="left:587px"><svg width="16" height="18" viewBox="0 0 16 18" style="left:10px;top:2px"><path d="M3,7 L13,7 L11.500,16 Q8,17.500 4.500,16 Z" fill="#d8dce8" stroke="#8088a0" stroke-width=".8"/><path d="M5,1 L6.500,9 M8,0.500 L8,9 M11,1 L9.500,9" stroke="#c03020" stroke-width="1.600"/><path d="M6.500,2 L7,9" stroke="#e8c020" stroke-width="1.400"/><path d="M10,2 L9.300,9" stroke="#3060c0" stroke-width="1.400"/><path d="M4.500,10 L11.500,10 L11,14 L5,14 Z" fill="#e8a030"/><path d="M5,12 L11,12" stroke="#40a040" stroke-width="1.500"/></svg><span>leaving a group - Paint</span></div>
<div id="tray"><span class="tm">17:48</span></div>
<svg width="100" height="30" viewBox="0 0 100 30" style="left:884px;top:0">
<circle cx="11.300" cy="15.300" r="8" fill="#2f9cf0" stroke="#d8ecff" stroke-width="1.200"/>
<circle cx="11.300" cy="15.300" r="6" fill="#3aa8f4"/>
<path d="M13,11.500 L9,15.300 L13,19" fill="none" stroke="#fff" stroke-width="2" stroke-linecap="round" stroke-linejoin="round"/>
<g><rect x="27" y="8.500" width="9" height="7.500" fill="#a8d4f4" stroke="#e8f0fa" stroke-width="1"/><rect x="21.500" y="11.500" width="9" height="7.500" fill="#8cc4f0" stroke="#e8f0fa" stroke-width="1"/><path d="M24,21.500 L29,21.500 M30,18.500 L34,18.500" stroke="#d8e0ea" stroke-width="2"/></g>
<g><rect x="45.500" y="8.500" width="9" height="7.500" fill="#2a3a8a" stroke="#c8d0e8" stroke-width="1"/><rect x="40.500" y="11.500" width="9" height="7.500" fill="#3a3a6a" stroke="#c8d0e8" stroke-width="1"/><path d="M43,21.500 L48,21.500" stroke="#d8c8d8" stroke-width="2"/><path d="M48.500,15 L56,22 M56,15 L48.500,22" stroke="#e8302a" stroke-width="2.200"/></g>
<path d="M58.500,9 L72,9 L74.500,11.500 L74.500,23 L58.500,23 Z" fill="#0c2a8a" stroke="#8ab0e8" stroke-width=".8"/><rect x="62" y="12" width="9" height="8" fill="#2a50b0"/><circle cx="66.500" cy="16" r="2.200" fill="none" stroke="#9ac0f0" stroke-width=".8" stroke-dasharray="1 1"/>
<rect x="76.500" y="8.500" width="15" height="15" fill="#e8b45a"/><path d="M80,12 Q84,9 87,12 Q88,16 84,17 Q79,17 80,12 Z M81,18 Q84,13 88,15" fill="none" stroke="#3a2a10" stroke-width="1.400"/><circle cx="87.500" cy="20" r="4" fill="#2a9a3a"/><path d="M85.500,20 L87,21.500 L89.800,18.500" fill="none" stroke="#fff" stroke-width="1.300"/>
</svg>
</div>
</div></body></html>
